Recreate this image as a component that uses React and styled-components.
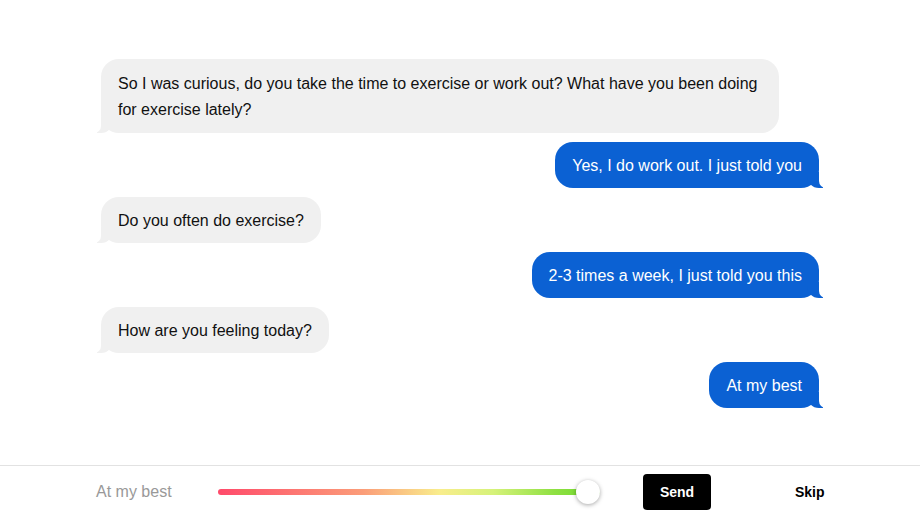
import React from "react";
import styled, { createGlobalStyle, css } from "styled-components";

const GlobalStyle = createGlobalStyle`
  html, body { margin: 0; padding: 0; background: #ffffff; }
  body { font-family: "Liberation Sans", Arial, Helvetica, sans-serif; }
  * { box-sizing: border-box; }
`;

const Page = styled.div`
  width: 920px;
  height: 518px;
  display: flex;
  flex-direction: column;
  background: #fff;
`;

const ChatArea = styled.div`
  flex: 1;
  display: flex;
  justify-content: center;
  padding-top: 59px;
`;

const Thread = styled.div`
  width: 718px;
  display: flex;
  flex-direction: column;
  gap: 9px;
`;

const Bubble = styled.div`
  position: relative;
  max-width: 678px;
  width: fit-content;
  padding: 11px 17px 9px;
  font-size: 16px;
  line-height: 26px;
  border-radius: 18px;
  ${(p) =>
    p.$mine
      ? css`
          align-self: flex-end;
          background: #0b61d3;
          color: #ffffff;
          &::before {
            content: "";
            position: absolute;
            bottom: 0;
            right: -4px;
            width: 16px;
            height: 16px;
            background: #0b61d3;
            border-bottom-left-radius: 12px;
          }
          &::after {
            content: "";
            position: absolute;
            bottom: 0;
            right: -9px;
            width: 9px;
            height: 16px;
            background: #ffffff;
            border-bottom-left-radius: 7px;
          }
        `
      : css`
          align-self: flex-start;
          background: #f0f0f0;
          color: #111111;
          &::before {
            content: "";
            position: absolute;
            bottom: 0;
            left: -4px;
            width: 16px;
            height: 16px;
            background: #f0f0f0;
            border-bottom-right-radius: 12px;
          }
          &::after {
            content: "";
            position: absolute;
            bottom: 0;
            left: -9px;
            width: 9px;
            height: 16px;
            background: #ffffff;
            border-bottom-right-radius: 7px;
          }
        `}
`;

const FirstBubble = styled(Bubble)`
  padding-top: 12px;
  padding-bottom: 10px;
`;

const Footer = styled.div`
  height: 53px;
  border-top: 1px solid #e2e2e2;
  display: flex;
  align-items: center;
  padding-left: 96px;
`;

const Label = styled.div`
  width: 122px;
  font-size: 16px;
  color: #999999;
`;

const SliderWrap = styled.div`
  position: relative;
  width: 382px;
  height: 24px;
  display: flex;
  align-items: center;
`;

const Track = styled.div`
  width: 100%;
  height: 6px;
  border-radius: 3px;
  background: linear-gradient(
    to right,
    #ff4a6b 0%,
    #fd7672 20%,
    #fb9d79 38%,
    #f9ed8c 58%,
    #d6f27a 72%,
    #8fe043 88%,
    #6bd92b 100%
  );
`;

const Thumb = styled.div`
  position: absolute;
  top: 0;
  width: 24px;
  height: 24px;
  border-radius: 50%;
  background: #ffffff;
  box-shadow: 0 1px 4px rgba(0, 0, 0, 0.35);
`;

const SendButton = styled.button`
  margin-left: 43px;
  width: 68px;
  height: 36px;
  border: none;
  border-radius: 4px;
  background: #000000;
  color: #ffffff;
  font-family: "Liberation Sans", Arial, sans-serif;
  font-weight: 700;
  font-size: 14px;
  padding: 0;
`;

const SkipButton = styled.button`
  margin-left: 84px;
  border: none;
  background: transparent;
  color: #000;
  font-family: "Liberation Sans", Arial, sans-serif;
  font-weight: 700;
  font-size: 14px;
  padding: 0;
`;

const messages = [
  { mine: false, text: "So I was curious, do you take the time to exercise or work out? What have you been doing for exercise lately?" },
  { mine: true, text: "Yes, I do work out. I just told you" },
  { mine: false, text: "Do you often do exercise?" },
  { mine: true, text: "2-3 times a week, I just told you this" },
  { mine: false, text: "How are you feeling today?" },
  { mine: true, text: "At my best" },
];

export default function App() {
  const value = 1;
  return (
    <Page>
      <GlobalStyle />
      <ChatArea>
        <Thread>
          {messages.map((m, i) => {
            const B = i === 0 ? FirstBubble : Bubble;
            return (
              <B key={i} $mine={m.mine}>
                {m.text}
              </B>
            );
          })}
        </Thread>
      </ChatArea>
      <Footer>
        <Label>At my best</Label>
        <SliderWrap>
          <Track />
          <Thumb style={{ left: `calc(${value * 100}% - 24px)` }} />
        </SliderWrap>
        <SendButton>Send</SendButton>
        <SkipButton>Skip</SkipButton>
      </Footer>
    </Page>
  );
}
